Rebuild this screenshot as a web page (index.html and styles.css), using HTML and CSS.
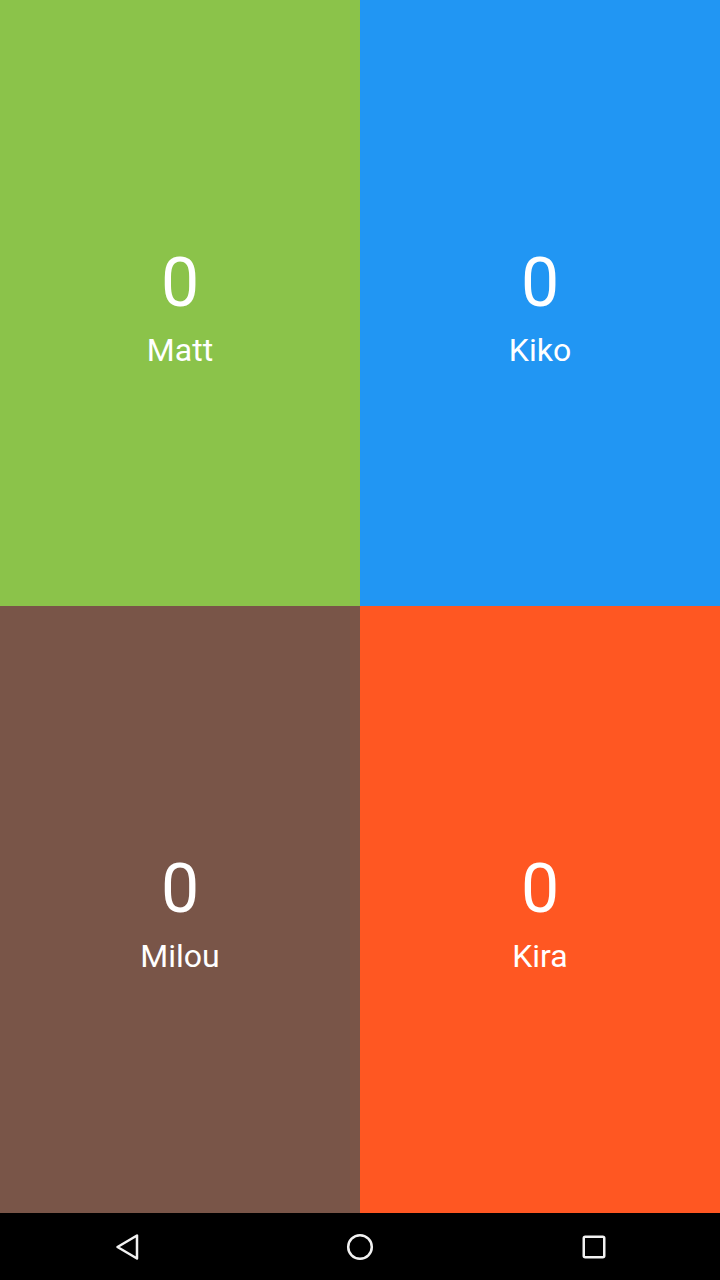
FILE: index.html
```html
<!DOCTYPE html>
<html lang="en">
<head>
<meta charset="utf-8">
<title>Scores</title>
<link rel="stylesheet" href="styles.css">
</head>
<body>
<div class="app">
  <main class="grid">
    <section class="player green">
      <div class="score">0</div>
      <div class="name">Matt</div>
    </section>
    <section class="player blue">
      <div class="score">0</div>
      <div class="name">Kiko</div>
    </section>
    <section class="player brown">
      <div class="score">0</div>
      <div class="name">Milou</div>
    </section>
    <section class="player orange">
      <div class="score">0</div>
      <div class="name">Kira</div>
    </section>
  </main>
  <nav class="navbar">
    <button class="nav-btn" aria-label="Back">
      <svg width="48" height="48" viewBox="0 0 48 48"><polygon points="15.5,24 35,12.5 35,35.5" fill="none" stroke="#f2f2f2" stroke-width="2.5" stroke-linejoin="round"/></svg>
    </button>
    <button class="nav-btn" aria-label="Home">
      <svg width="48" height="48" viewBox="0 0 48 48"><circle cx="24" cy="24" r="11.8" fill="none" stroke="#f2f2f2" stroke-width="2.5"/></svg>
    </button>
    <button class="nav-btn" aria-label="Recents">
      <svg width="48" height="48" viewBox="0 0 48 48"><rect x="13.75" y="13.75" width="20.5" height="20.5" rx="1.5" fill="none" stroke="#f2f2f2" stroke-width="2.5"/></svg>
    </button>
  </nav>
</div>
</body>
</html>
```
FILE: styles.css
```css
* { box-sizing: border-box; }
html, body { margin: 0; padding: 0; }
body {
  width: 720px;
  height: 1280px;
  font-family: Roboto, "Noto Sans", sans-serif;
  background: #000;
  overflow: hidden;
}
.app {
  display: flex;
  flex-direction: column;
  height: 1280px;
}
.grid {
  flex: 1;
  display: grid;
  grid-template-columns: 360px 360px;
  grid-template-rows: 606px 607px;
}
.player {
  display: flex;
  flex-direction: column;
  align-items: center;
  justify-content: center;
  padding-top: 4px;
  color: #fff;
}
.green { background: #8bc34a; }
.blue { background: #2196f3; }
.brown { background: #795548; }
.orange { background: #ff5722; }
.score {
  font-size: 68px;
  line-height: 80px;
}
.name {
  font-size: 32px;
  line-height: 35px;
  margin-top: 10px;
}
.navbar {
  height: 67px;
  display: flex;
  align-items: center;
  justify-content: center;
  gap: 186px;
  background: #000;
}
.nav-btn {
  width: 48px;
  height: 48px;
  padding: 0;
  border: 0;
  background: transparent;
  display: flex;
  align-items: center;
  justify-content: center;
}
.nav-btn svg { display: block; }
```
